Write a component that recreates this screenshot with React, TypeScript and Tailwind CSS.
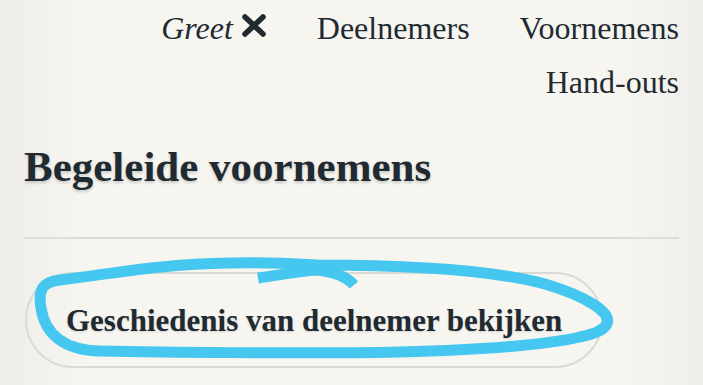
import React from "react";

export default function App() {
  const serif = { fontFamily: '"Liberation Serif", "Times New Roman", serif' };
  return (
    <div
      className="relative h-[385px] w-[703px] overflow-hidden bg-[linear-gradient(to_right,#eeede9,#f6f5f0_12%,#f6f5f0_88%,#efeeea)] text-[#202a30]"
      style={serif}
    >
      <div className="px-6">
        <nav className="flex flex-wrap justify-end gap-x-[50px] gap-y-[17px] pt-[10px] text-[32px] leading-[1.15]">
          <span className="flex items-center gap-[8px]">
            <span className="italic">Greet</span>
            <svg width="26" height="23" viewBox="0 0 26 23" className="mt-[-5px]">
              <path d="M4 3 L22 20 M22 3 L4 20" stroke="#202a30" strokeWidth="5.5" strokeLinecap="round" />
            </svg>
          </span>
          <span>Deelnemers</span>
          <span>Voornemens</span>
          <span>Hand-outs</span>
        </nav>
        <h1 className="mt-[40px] text-[43px] font-bold leading-[1.2] [text-shadow:0_2px_3px_rgba(0,0,0,0.18)]">
          Begeleide voornemens
        </h1>
        <div className="mt-[45px] h-[2px] bg-[#dcdcd8]" />
        <div className="mt-[33px] flex">
          <button className="ml-px flex h-[96px] w-[578px] items-center rounded-full border-2 border-[#dad9d5] pl-[39px] text-[31px] font-bold leading-none [text-shadow:0_1px_2px_rgba(0,0,0,0.15)]">
            Geschiedenis van deelnemer bekijken
          </button>
        </div>
      </div>
      <svg
        className="pointer-events-none absolute left-0 top-0"
        width="703"
        height="385"
        viewBox="0 0 703 385"
      >
        <path
          d="M 318 265 C 420 265, 500 272, 545 284 C 585 296, 612 312, 607 324 C 602 332, 592 334, 580 337 C 540 346, 480 350, 400 352 C 300 354, 150 352, 100 351 C 65 350, 45 335, 41 308 C 38 290, 42 282, 60 280 C 110 274, 160 264, 230 263 C 270 262, 300 264, 318 265 Z"
          fill="none"
          stroke="#46c7ef"
          strokeWidth="11"
          strokeLinejoin="round"
        />
        <path
          d="M 258 278 C 280 275, 300 271, 316 270 C 335 272, 348 278, 354 285"
          fill="none"
          stroke="#46c7ef"
          strokeWidth="11"
          strokeLinecap="butt"
        />
      </svg>
    </div>
  );
}
